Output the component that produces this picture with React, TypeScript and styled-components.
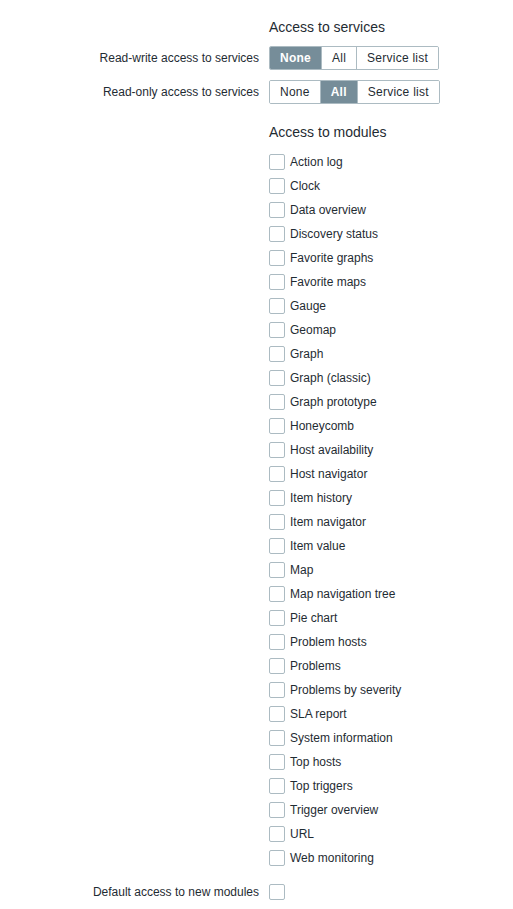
import React, { useState } from 'react';
import styled, { createGlobalStyle } from 'styled-components';

const GlobalStyle = createGlobalStyle`
  html, body {
    margin: 0;
    padding: 0;
    background: #ffffff;
  }
  body {
    font-family: "Liberation Sans", Arial, sans-serif;
    font-size: 12px;
    color: #1f2c33;
  }
`;

const Form = styled.div`
  display: flex;
  flex-direction: column;
  padding-top: 18px;
`;

const Row = styled.div<{ $top?: number }>`
  display: grid;
  grid-template-columns: 259px 1fr;
  column-gap: 10px;
  align-items: center;
  margin-top: ${p => (p.$top ?? 0)}px;
`;

const Label = styled.div`
  text-align: right;
  line-height: 16px;
`;

const Heading = styled.div`
  grid-column: 2;
  font-size: 14px;
  line-height: 18px;
`;

const Segmented = styled.div`
  display: inline-flex;
  justify-self: start;
  height: 24px;
  border: 1px solid #acbbc2;
  border-radius: 2px;
  box-sizing: border-box;
  overflow: hidden;
`;

const Segment = styled.button<{ $active: boolean }>`
  font-family: inherit;
  font-size: 12px;
  letter-spacing: 0.25px;
  line-height: 22px;
  height: 22px;
  padding: 0 10px;
  margin: 0;
  border: none;
  border-left: 1px solid #acbbc2;
  background: ${p => (p.$active ? '#768d99' : '#ffffff')};
  color: ${p => (p.$active ? '#ffffff' : '#1f2c33')};
  font-weight: ${p => (p.$active ? 'bold' : 'normal')};
  cursor: pointer;

  &:first-child {
    border-left: none;
  }
`;

const CheckList = styled.ul`
  grid-column: 2;
  list-style: none;
  margin: 0;
  padding: 0;
  display: flex;
  flex-direction: column;
  gap: 8px;
`;

const CheckItem = styled.li`
  display: flex;
  align-items: center;
  gap: 5px;
  height: 16px;
  line-height: 16px;
`;

const Box = styled.span<{ $checked: boolean }>`
  width: 16px;
  height: 16px;
  box-sizing: border-box;
  border: 1px solid #acbbc2;
  border-radius: 2px;
  background: ${p => (p.$checked ? '#768d99' : '#ffffff')};
  flex-shrink: 0;
  cursor: pointer;
`;

const modules = [
  'Action log',
  'Clock',
  'Data overview',
  'Discovery status',
  'Favorite graphs',
  'Favorite maps',
  'Gauge',
  'Geomap',
  'Graph',
  'Graph (classic)',
  'Graph prototype',
  'Honeycomb',
  'Host availability',
  'Host navigator',
  'Item history',
  'Item navigator',
  'Item value',
  'Map',
  'Map navigation tree',
  'Pie chart',
  'Problem hosts',
  'Problems',
  'Problems by severity',
  'SLA report',
  'System information',
  'Top hosts',
  'Top triggers',
  'Trigger overview',
  'URL',
  'Web monitoring',
];

const options = ['None', 'All', 'Service list'];

const SegmentedControl: React.FC<{ value: string; onChange: (v: string) => void }> = ({ value, onChange }) => (
  <Segmented>
    {options.map(o => (
      <Segment key={o} $active={o === value} onClick={() => onChange(o)}>
        {o}
      </Segment>
    ))}
  </Segmented>
);

const App: React.FC = () => {
  const [rw, setRw] = useState('None');
  const [ro, setRo] = useState('All');
  const [checked, setChecked] = useState<Record<string, boolean>>({});
  const [defaultAccess, setDefaultAccess] = useState(false);

  const toggle = (m: string) => setChecked(c => ({ ...c, [m]: !c[m] }));

  return (
    <>
      <GlobalStyle />
      <Form>
        <Row>
          <Heading>Access to services</Heading>
        </Row>
        <Row $top={10}>
          <Label>Read-write access to services</Label>
          <SegmentedControl value={rw} onChange={setRw} />
        </Row>
        <Row $top={10}>
          <Label>Read-only access to services</Label>
          <SegmentedControl value={ro} onChange={setRo} />
        </Row>
        <Row $top={19}>
          <Heading>Access to modules</Heading>
        </Row>
        <Row $top={13}>
          <CheckList>
            {modules.map(m => (
              <CheckItem key={m} onClick={() => toggle(m)}>
                <Box $checked={!!checked[m]} />
                {m}
              </CheckItem>
            ))}
          </CheckList>
        </Row>
        <Row $top={18}>
          <Label>Default access to new modules</Label>
          <Box $checked={defaultAccess} onClick={() => setDefaultAccess(v => !v)} />
        </Row>
      </Form>
    </>
  );
};

export default App;
